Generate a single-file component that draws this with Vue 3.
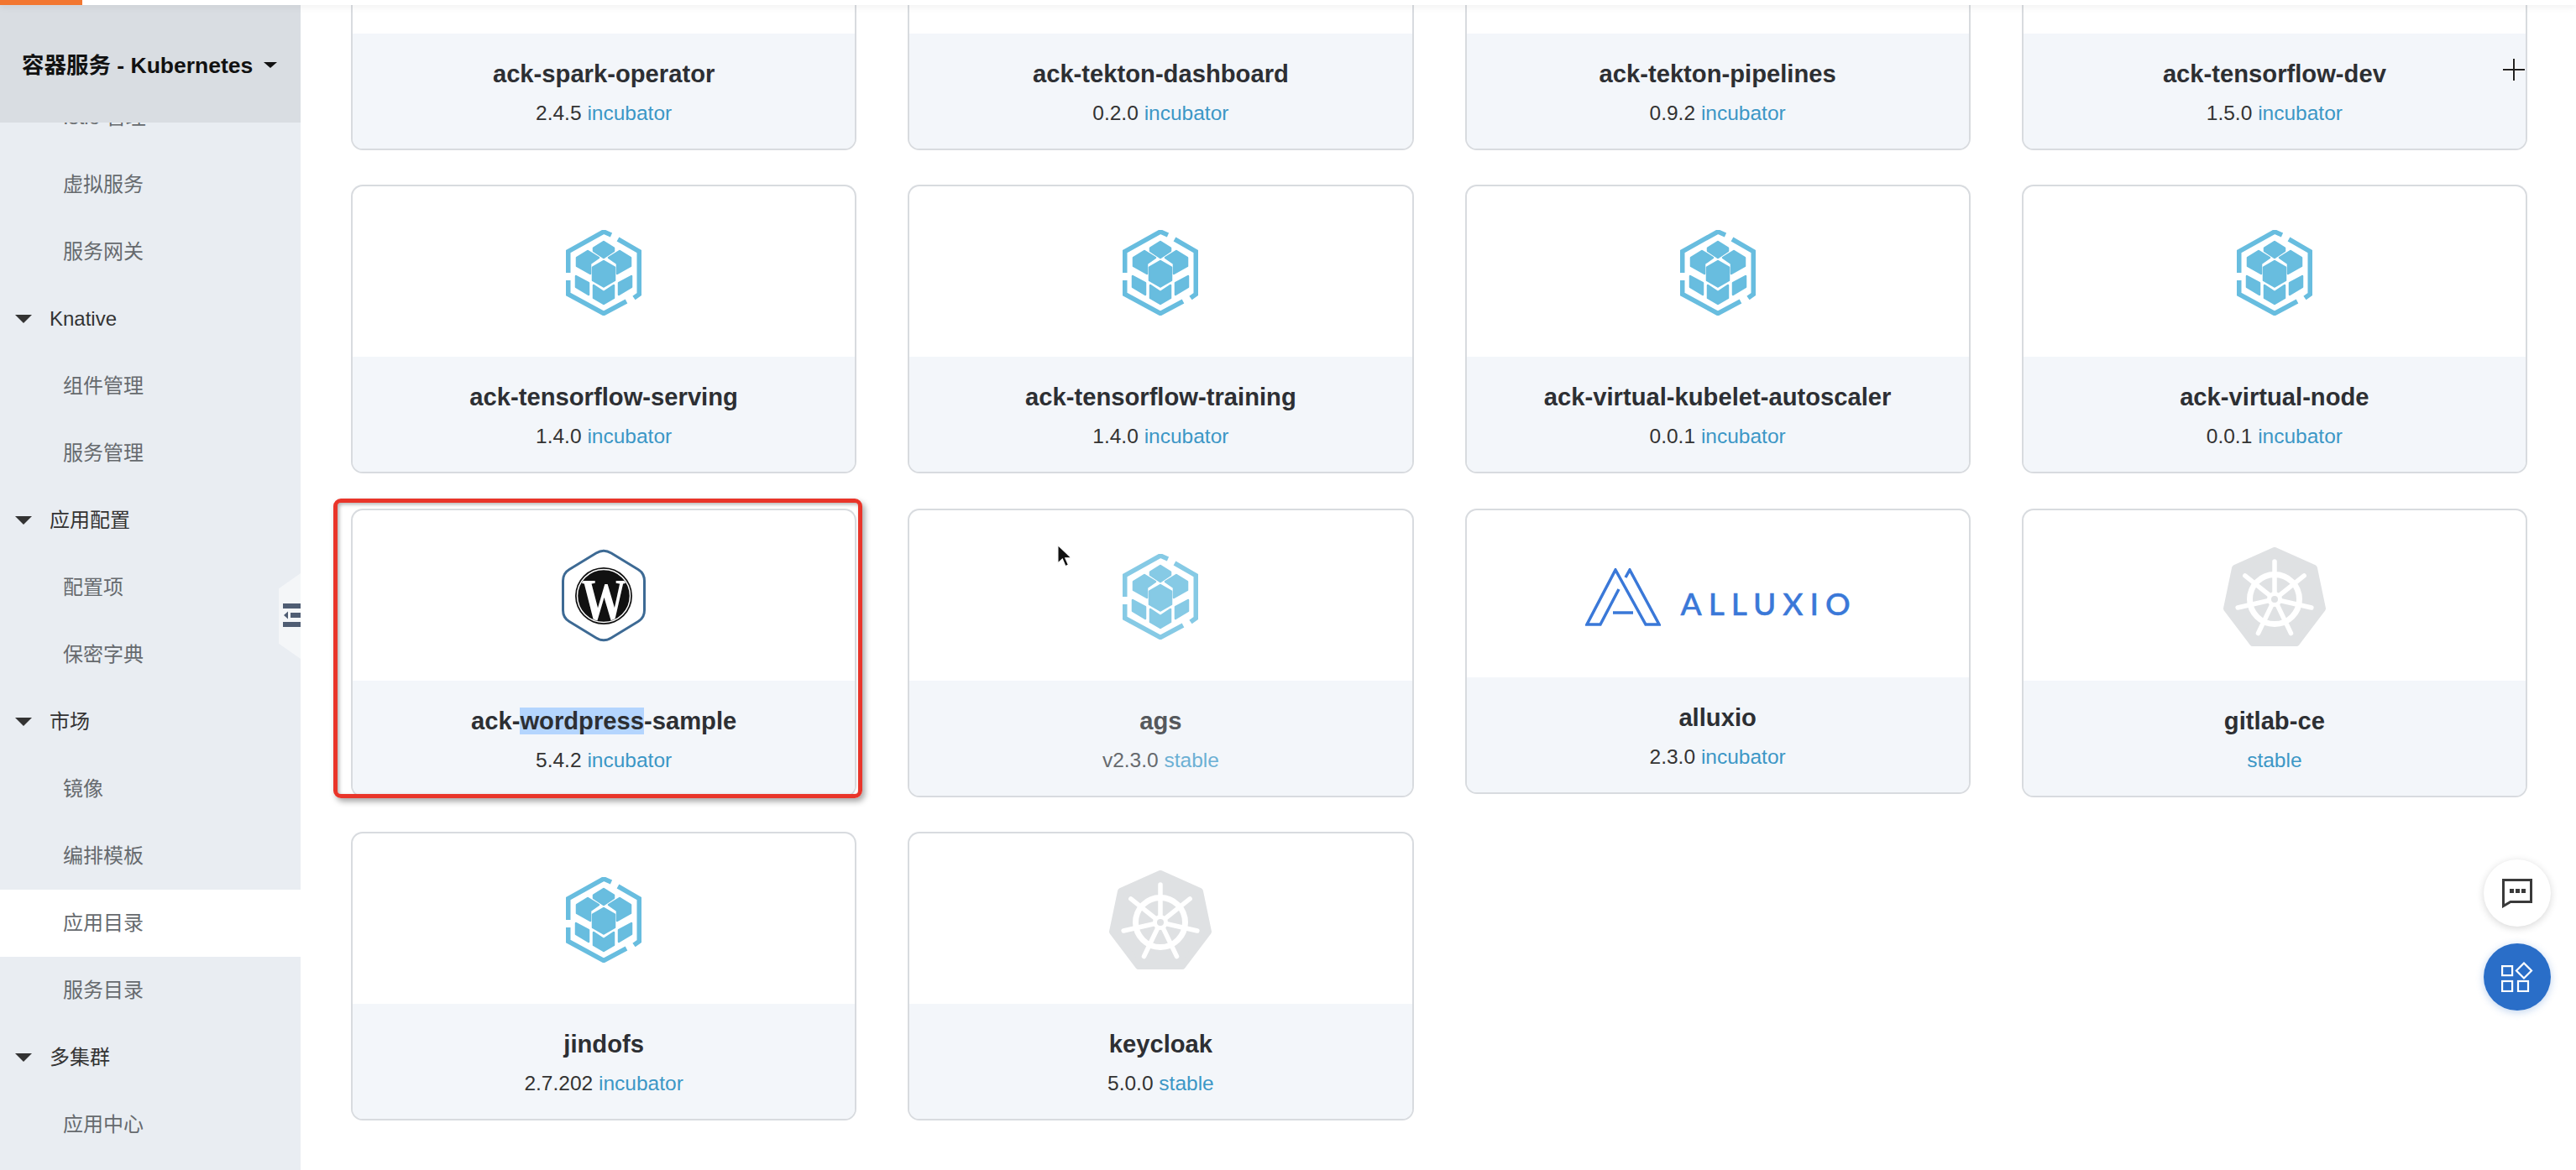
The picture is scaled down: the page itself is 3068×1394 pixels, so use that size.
<template>
  <div class="page">
    <div class="topbar"><div class="topbar-mark"></div></div>

    <aside class="sidebar">
      <div class="side-head">
        <span>容器服务 - Kubernetes</span>
        <i class="head-caret"></i>
      </div>
      <div class="side-scroll">
        <ul class="menu">
          <li
            v-for="item in menu"
            :key="item.label"
            class="menu-row"
            :class="{ group: item.group, active: item.active, latin: item.latin }"
          >
            <i v-if="item.group" class="group-caret"></i>
            <span>{{ item.label }}</span>
          </li>
        </ul>
      </div>
      <div class="collapse">
        <svg class="collapse-icon" width="21" height="28" viewBox="0 0 21 28">
          <rect x="0" y="0" width="21" height="6" fill="#4f5d73" />
          <rect x="0" y="22" width="21" height="6" fill="#4f5d73" />
          <rect x="9" y="11" width="12" height="6" fill="#4f5d73" />
          <path d="M6 9.5v9L1 14z" fill="#4f5d73" />
        </svg>
      </div>
    </aside>

    <main class="main">
      <div class="grid">
        <div v-for="c in cards" :key="c.name" class="card" :class="{ dim: c.dim, marked: c.mark }">
          <div class="card-top" :class="'top-' + c.icon">
            <svg v-if="c.icon === 'hex'" width="90" height="102" viewBox="0 0 90 102">
              <g fill="none" stroke="#68bddf" stroke-width="5.5">
                <path d="M54 6 45 2 2.750 25.500V51" />
                <path d="M62 11 87.250 25.500V76.500L81 81" />
                <path d="M2.750 60V76.500L45 99.500 72 85" />
              </g>
              <g fill="#68bddf" stroke="#68bddf" stroke-width="2.500" stroke-linejoin="round">
                <path d="M45 14 57 21.500V25L45 33 33 25V21.500Z" />
                <path d="M26 25 39 33 29 40V52L13 43V33Z" />
                <path d="M64 25 51 33 61 40V52L77 43V33Z" />
                <path d="M45 37 58 44.500V60L45 67.500 32 60V44.500Z" />
                <path d="M12 55 27 63V77L12 68Z" />
                <path d="M78 55 63 63V77L78 68Z" />
                <path d="M33 66 45 74 57 66V81L45 88 33 81Z" />
              </g>
            </svg>

            <svg v-else-if="c.icon === 'wp'" width="100" height="111" viewBox="0 0 100 111">
              <clipPath id="wp-disc">
                <circle cx="50" cy="56" r="30.500" />
              </clipPath>
              <path
                d="M41 5Q50 -0.500 59 5L91 24.500Q98.500 29 98.500 38V73Q98.500 82 91 86.500L59 106Q50 111.500 41 106L9 86.500Q1.500 82 1.500 73V38Q1.500 29 9 24.500Z"
                fill="#fff"
                stroke="#3d6a94"
                stroke-width="3"
              />
              <circle cx="50" cy="56" r="34" fill="#111" />
              <circle cx="50" cy="56" r="31.500" fill="#111" stroke="#fff" stroke-width="1.500" />
              <g clip-path="url(#wp-disc)">
                <text class="wp-letter" text-anchor="middle" transform="translate(50 87) scale(1 1.36)">W</text>
              </g>
            </svg>

            <div v-else-if="c.icon === 'alluxio'" class="alluxio">
              <svg width="90" height="69" viewBox="0 0 90 69">
                <path
                  d="M48 11 53 2 88 67H72L36 2 2 67H18L40 25M33 53H57"
                  fill="none"
                  stroke="#3a78d8"
                  stroke-width="3.500"
                />
              </svg>
              <span class="alluxio-text">ALLUXIO</span>
            </div>

            <svg v-else width="122" height="118" viewBox="0 0 122 118">
              <path
                d="M61 4 108 25 118 73 87 114H35L4 73 14 25Z"
                fill="#dfe1e3"
                stroke="#dfe1e3"
                stroke-width="8"
                stroke-linejoin="round"
              />
              <circle cx="61" cy="62" r="29.500" fill="none" stroke="#fff" stroke-width="7" />
              <line
                v-for="n in 7"
                :key="n"
                x1="61"
                y1="62"
                x2="61"
                y2="17"
                stroke="#fff"
                stroke-width="5.500"
                stroke-linecap="round"
                :transform="`rotate(${(n - 1) * 51.43} 61 62)`"
              />
              <circle cx="61" cy="62" r="9" fill="#fff" />
              <circle cx="61" cy="62" r="4" fill="#dfe1e3" />
            </svg>
          </div>

          <div class="card-foot">
            <div class="card-name">
              <template v-if="c.mark">ack-<span class="selected">wordpress</span>-sample</template>
              <template v-else>{{ c.name }}</template>
            </div>
            <div class="card-meta">
              {{ c.version }} <span class="tag">{{ c.tag }}</span>
            </div>
          </div>

          <div v-if="c.mark" class="annotation"></div>
          <svg v-if="c.dim" class="pointer" width="20" height="32" viewBox="0 0 22 32">
            <path d="M2 1V25L8 19.500 12 29 16 27 12 18H20Z" fill="#111" stroke="#fff" stroke-width="1.500" />
          </svg>
        </div>
      </div>
    </main>

    <svg class="crosshair" width="30" height="30" viewBox="0 0 30 30">
      <path d="M15 2V28M2 15H28" stroke="#fff" stroke-width="4" />
      <path d="M15 2V28M2 15H28" stroke="#222" stroke-width="2" />
    </svg>

    <div class="fabs">
      <button class="fab">
        <svg width="36" height="35" viewBox="0 0 36 35">
          <path d="M1.500 1.500H34.500V27.500H10L1.500 32.500Z" fill="none" stroke="#3a3a3a" stroke-width="3" />
          <rect x="9" y="12" width="5" height="5" fill="#3a3a3a" />
          <rect x="16" y="12" width="5" height="5" fill="#3a3a3a" />
          <rect x="23" y="12" width="5" height="5" fill="#3a3a3a" />
        </svg>
      </button>
      <button class="fab fab-blue">
        <svg width="38" height="36" viewBox="0 0 38 36">
          <g fill="none" stroke="#fff" stroke-width="2.200">
            <rect x="1.100" y="5.100" width="12" height="11" />
            <rect x="1.100" y="23" width="12" height="12" />
            <rect x="20" y="23" width="12" height="12" />
            <path d="M27 1.500 36 10.500 27 19.500 18 10.500Z" />
          </g>
        </svg>
      </button>
    </div>
  </div>
</template>

<script setup>
const menu = [
  { label: 'Istio 管理' },
  { label: '虚拟服务' },
  { label: '服务网关' },
  { label: 'Knative', group: true, latin: true },
  { label: '组件管理' },
  { label: '服务管理' },
  { label: '应用配置', group: true },
  { label: '配置项' },
  { label: '保密字典' },
  { label: '市场', group: true },
  { label: '镜像' },
  { label: '编排模板' },
  { label: '应用目录', active: true },
  { label: '服务目录' },
  { label: '多集群', group: true },
  { label: '应用中心' },
]

const cards = [
  { name: 'ack-spark-operator', version: '2.4.5', tag: 'incubator', icon: 'hex' },
  { name: 'ack-tekton-dashboard', version: '0.2.0', tag: 'incubator', icon: 'hex' },
  { name: 'ack-tekton-pipelines', version: '0.9.2', tag: 'incubator', icon: 'hex' },
  { name: 'ack-tensorflow-dev', version: '1.5.0', tag: 'incubator', icon: 'hex' },
  { name: 'ack-tensorflow-serving', version: '1.4.0', tag: 'incubator', icon: 'hex' },
  { name: 'ack-tensorflow-training', version: '1.4.0', tag: 'incubator', icon: 'hex' },
  { name: 'ack-virtual-kubelet-autoscaler', version: '0.0.1', tag: 'incubator', icon: 'hex' },
  { name: 'ack-virtual-node', version: '0.0.1', tag: 'incubator', icon: 'hex' },
  { name: 'ack-wordpress-sample', version: '5.4.2', tag: 'incubator', icon: 'wp', mark: true },
  { name: 'ags', version: 'v2.3.0', tag: 'stable', icon: 'hex', dim: true },
  { name: 'alluxio', version: '2.3.0', tag: 'incubator', icon: 'alluxio' },
  { name: 'gitlab-ce', version: '', tag: 'stable', icon: 'helm' },
  { name: 'jindofs', version: '2.7.202', tag: 'incubator', icon: 'hex' },
  { name: 'keycloak', version: '5.0.0', tag: 'stable', icon: 'helm' },
]
</script>

<style>
html,
body {
  margin: 0;
  background: #fff;
  overflow: hidden;
}
</style>

<style scoped>
.page {
  position: relative;
  display: flex;
  width: 3068px;
  height: 1394px;
  overflow: hidden;
  font-family: "Liberation Sans", "Noto Sans CJK SC", sans-serif;
  background: #fff;
}

.topbar {
  position: absolute;
  top: 0;
  left: 0;
  right: 0;
  height: 6px;
  background: #fff;
  box-shadow: 0 2px 8px rgba(0, 0, 0, 0.08);
  z-index: 5;
}

.topbar-mark {
  width: 98px;
  height: 6px;
  background: #f27630;
}

.sidebar {
  position: relative;
  display: flex;
  flex-direction: column;
  flex: none;
  width: 358px;
  padding-top: 6px;
  box-sizing: border-box;
  background: #e9edf2;
}

.side-head {
  display: flex;
  align-items: center;
  flex: none;
  height: 140px;
  padding: 0 0 2px 26px;
  box-sizing: border-box;
  background: #d9dde2;
  color: #111;
  font-size: 26.5px;
  font-weight: 700;
  position: relative;
  z-index: 1;
}

.head-caret {
  width: 0;
  height: 0;
  margin: 4px 0 0 13px;
  border-left: 8px solid transparent;
  border-right: 8px solid transparent;
  border-top: 7px solid #111;
}

.side-scroll {
  flex: 1;
  overflow: hidden;
}

.menu {
  margin: -46px 0 0;
  padding: 0;
  list-style: none;
}

.menu-row {
  display: flex;
  align-items: center;
  height: 80px;
  padding: 0 0 6px 75px;
  box-sizing: border-box;
  color: #666a6e;
  font-size: 24px;
}

.menu-row.group {
  position: relative;
  padding-left: 59px;
  color: #333;
}

.menu-row.latin {
  padding-bottom: 0;
}

.menu-row.active {
  background: #fff;
}

.group-caret {
  position: absolute;
  left: 18px;
  top: 35px;
  width: 0;
  height: 0;
  border-left: 10px solid transparent;
  border-right: 10px solid transparent;
  border-top: 10px solid #333;
}

.collapse {
  position: absolute;
  top: 683px;
  right: 0;
  display: flex;
  align-items: center;
  justify-content: flex-end;
  width: 26px;
  height: 102px;
  background: #f4f6f8;
  clip-path: polygon(100% 0, 0 18%, 0 82%, 100% 100%);
}

.collapse-icon {
  flex: none;
  margin-top: -2px;
}

.main {
  flex: 1;
  padding: 0 58px 0 60px;
  min-width: 0;
}

.grid {
  display: grid;
  grid-template-columns: repeat(4, 1fr);
  column-gap: 61px;
  row-gap: 41.33px;
  align-items: start;
  margin-top: -165px;
}

.card {
  position: relative;
  border-radius: 14px;
  box-shadow: inset 0 0 0 2px #d8dbdf;
}

.card-top {
  display: flex;
  justify-content: center;
  height: 205px;
  box-sizing: border-box;
}

.top-hex {
  padding-top: 54px;
}

.top-wp {
  padding-top: 48px;
}

.top-helm {
  padding-top: 46px;
}

.top-alluxio {
  height: 201px;
  padding-top: 71px;
}

.card-foot {
  height: 137px;
  box-sizing: border-box;
  padding-top: 28px;
  margin: 0 2px 2px;
  border-radius: 0 0 12px 12px;
  background: #f3f6fa;
  text-align: center;
}

.card-name {
  color: #2d2f33;
  font-size: 29.2px;
  font-weight: 700;
  line-height: 40px;
}

.selected {
  background: #b4d5fe;
}

.card-meta {
  margin-top: 10px;
  color: #333;
  font-size: 24.5px;
  line-height: 34px;
}

.tag {
  color: #3c97c6;
}

.dim .card-top svg:not(.pointer) {
  opacity: 0.8;
}

.dim .card-name {
  color: #55585c;
}

.dim .card-meta {
  color: #666a6e;
}

.dim .tag {
  color: #6cb0d4;
}

.wp-letter {
  font-family: "Liberation Serif", serif;
  font-size: 54px;
  font-weight: 700;
  fill: #fff;
}

.alluxio {
  display: flex;
  align-items: flex-start;
  gap: 24px;
}

.alluxio-text {
  margin-top: 21px;
  margin-right: -8px;
  color: #3a78d8;
  font-family: Lato, sans-serif;
  font-size: 37px;
  font-weight: 500;
  line-height: 42px;
  letter-spacing: 8px;
  -webkit-text-stroke: 0.5px #3a78d8;
}

.annotation {
  position: absolute;
  top: -12px;
  left: -21px;
  right: -7px;
  bottom: -1px;
  border: 5px solid #e9352a;
  border-radius: 9px;
  box-shadow: 3px 4px 7px rgba(0, 0, 0, 0.35), inset 2px 2px 4px rgba(0, 0, 0, 0.3);
  pointer-events: none;
}

.pointer {
  position: absolute;
  left: 177px;
  top: 41px;
}

.crosshair {
  position: absolute;
  left: 2979px;
  top: 68px;
  z-index: 3;
}

.fabs {
  position: absolute;
  left: 2958px;
  top: 1024px;
  display: flex;
  flex-direction: column;
  gap: 20px;
}

.fab {
  display: flex;
  align-items: center;
  justify-content: center;
  width: 80px;
  height: 80px;
  padding: 0;
  border: none;
  border-radius: 50%;
  background: #fff;
  box-shadow: 0 2px 10px rgba(0, 0, 0, 0.16);
}

.fab-blue {
  background: #2a6ec8;
  box-shadow: 0 2px 10px rgba(42, 110, 200, 0.3);
}
</style>
